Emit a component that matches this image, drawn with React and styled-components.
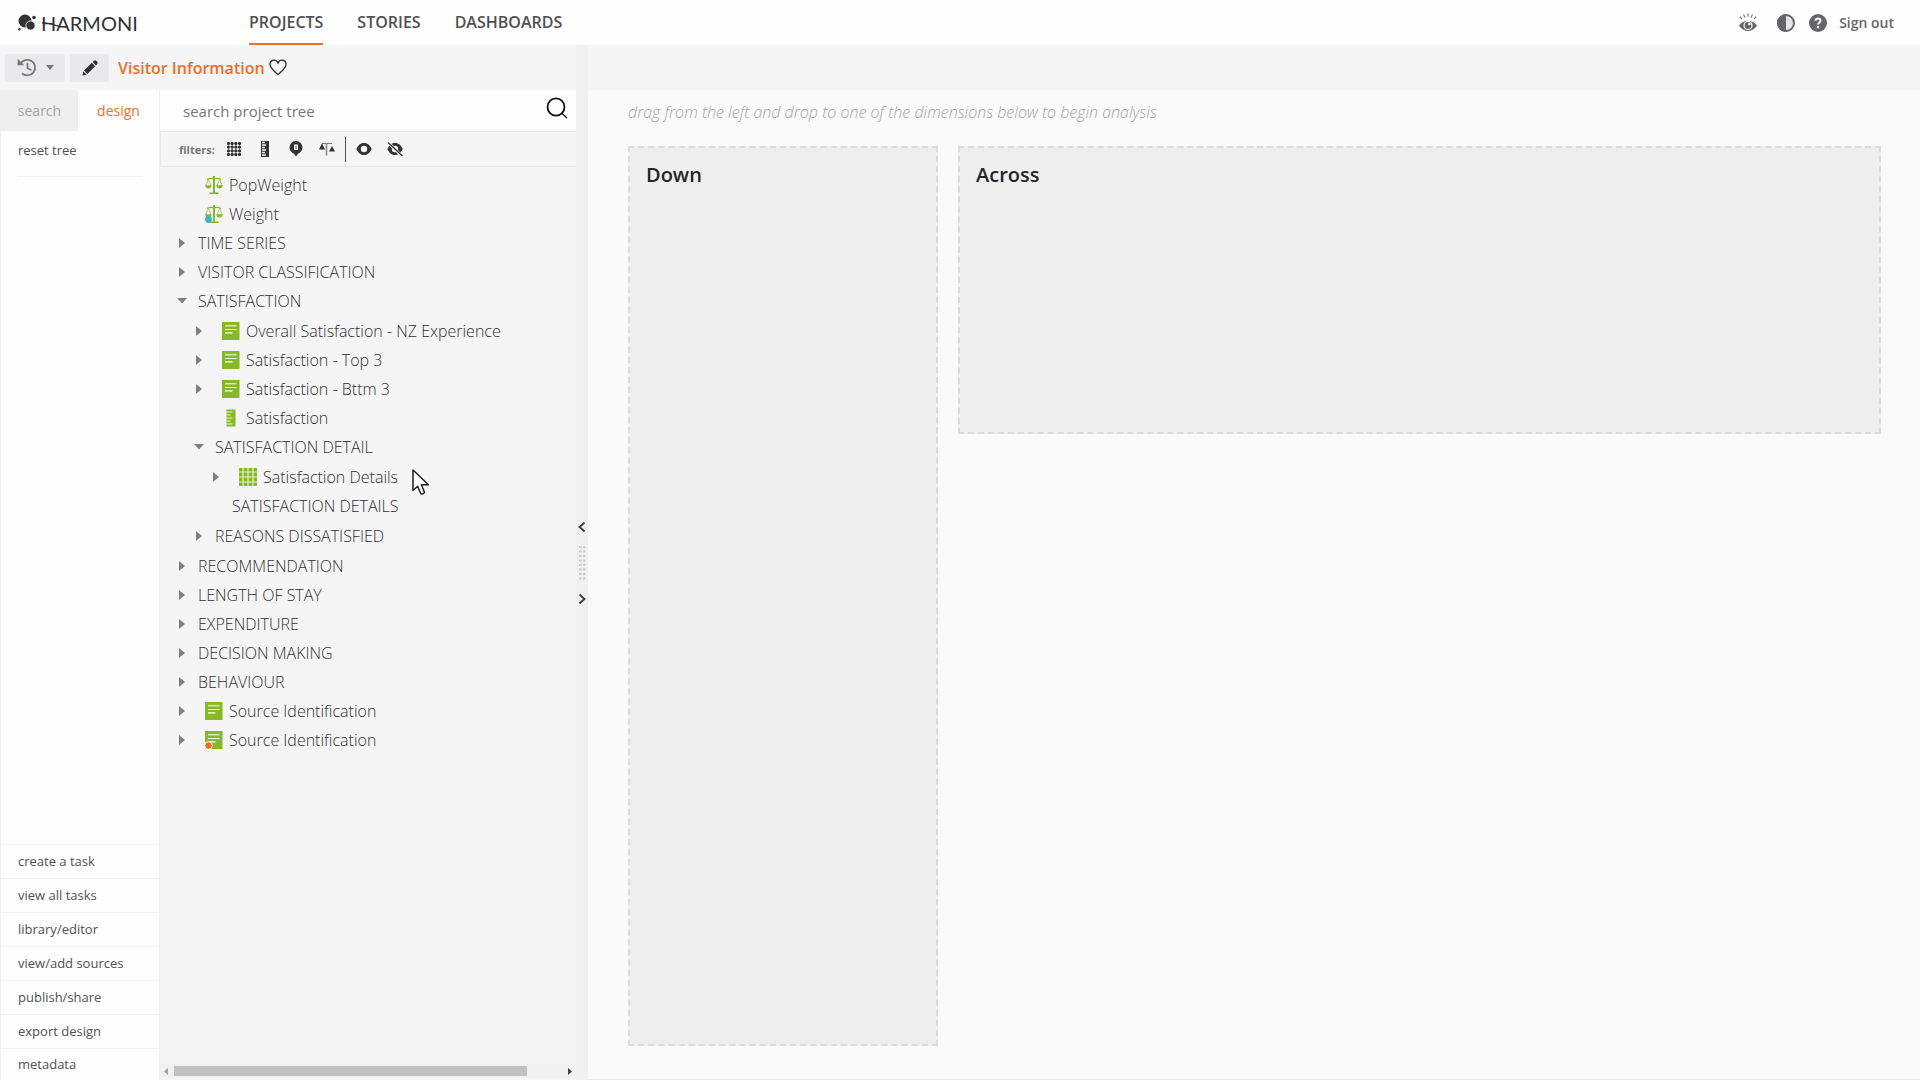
import React from 'react';
import styled, { createGlobalStyle, css } from 'styled-components';

const Colors = {
  orange: '#e8702a',
  green: '#86b828',
  text: '#505052',
  dark: '#333335',
  white: '#fefefe',
  panel: '#f5f5f5',
  line: '#e9e9e9',
};

const GlobalStyle = createGlobalStyle`
  * {
    box-sizing: border-box;
  }
  body {
    margin: 0;
    font-family: 'Open Sans', 'Noto Sans', sans-serif;
    color: ${Colors.text};
    background: #fafafa;
  }
  button,
  input {
    font: inherit;
    color: inherit;
    border: 0;
    padding: 0;
    background: none;
  }
  a {
    color: inherit;
    text-decoration: none;
  }
  ul {
    list-style: none;
    margin: 0;
    padding: 0;
  }
  svg {
    display: block;
    flex: none;
  }
`;

const Page = styled.div`
  display: flex;
  flex-direction: column;
  height: 100vh;
`;

const Header = styled.header`
  display: flex;
  height: 45px;
  background: ${Colors.white};
`;

const Brand = styled.a`
  display: flex;
  align-items: center;
  width: 249px;
  padding-left: 17px;
`;

const BrandName = styled.span`
  position: relative;
  margin-left: 4px;
  font-family: Lato, sans-serif;
  font-size: 20px;
  line-height: 24px;
  color: ${Colors.dark};
  svg {
    position: absolute;
    left: 0;
    top: 8px;
  }
`;

const Nav = styled.nav`
  display: flex;
  flex: 1;
  gap: 34px;
`;

const NavLink = styled.a`
  padding-top: 2px;
  font-size: 16px;
  font-weight: 600;
  line-height: 41px;
  border-bottom: 2px solid transparent;
  ${(props) =>
    props.$active &&
    css`
      border-color: ${Colors.orange};
    `}
`;

const HeaderTools = styled.div`
  display: flex;
  align-items: center;
  gap: 12px;
  padding-right: 26px;
  color: #666668;
  button:first-child {
    margin-right: 6px;
  }
  button + button {
    margin-left: 2px;
  }
  a {
    font-size: 14px;
    font-weight: 600;
  }
`;

const Body = styled.div`
  display: flex;
  flex: 1;
  min-height: 0;
`;

const Side = styled.aside`
  display: flex;
  flex-direction: column;
  width: 576px;
`;

const Toolbar = styled.div`
  display: flex;
  align-items: center;
  height: 45px;
  padding-left: 5px;
  background: ${Colors.panel};
`;

const ToolButton = styled.button`
  display: flex;
  align-items: center;
  justify-content: center;
  gap: 9px;
  width: ${(props) => props.$width}px;
  height: 28px;
  margin-right: 5px;
  border-radius: 2px;
  background: #e9e9eb;
`;

const ProjectTitle = styled.h1`
  margin: 0 4px;
  font-size: 16px;
  font-weight: 600;
  color: ${Colors.orange};
`;

const SideBody = styled.div`
  display: flex;
  flex: 1;
  min-height: 0;
`;

const MenuColumn = styled.div`
  display: flex;
  flex-direction: column;
  width: 160px;
  border-left: 1px solid #f0f0f0;
  border-right: 1px solid #f0f0f0;
  background: ${Colors.white};
`;

const Tabs = styled.div`
  display: flex;
  height: 41px;
`;

const Tab = styled.button`
  flex: ${(props) => (props.$active ? '1' : '0 0 77px')};
  font-size: 14px;
  color: ${(props) => (props.$active ? Colors.orange : '#a3a3a3')};
  background: ${(props) => (props.$active ? Colors.white : '#efefef')};
`;

const ResetRow = styled.div`
  flex: 1;
  margin: 0 16px;
  button {
    display: block;
    width: 100%;
    height: 46px;
    padding: 0 1px 8px;
    text-align: left;
    font-size: 13px;
    border-bottom: 1px solid #f1f1f3;
  }
`;

const MenuLink = styled.a`
  display: block;
  padding-left: 17px;
  border-top: 1px solid #f3f3f5;
  font-size: 13px;
  line-height: 33px;
  li:last-child & {
    line-height: 31px;
  }
`;

const TreeColumn = styled.section`
  position: relative;
  display: flex;
  flex: 1;
  flex-direction: column;
  min-width: 0;
  background: ${Colors.panel};
`;

const SearchBox = styled.label`
  display: flex;
  height: 41px;
  padding: 0 8px 0 23px;
  background: ${Colors.white};
  input {
    flex: 1;
    outline: 0;
    font-size: 15px;
  }
  input::placeholder {
    color: #77777a;
    opacity: 1;
  }
  svg {
    margin-top: 7px;
  }
`;

const Filters = styled.div`
  display: flex;
  align-items: center;
  height: 36px;
  padding-left: 18px;
  border: 1px solid ${Colors.line};
  border-right: 0;
  color: ${Colors.dark};
  span {
    width: 39px;
    font-size: 11px;
    font-weight: 700;
    color: #77777a;
  }
`;

const FilterButton = styled.button`
  display: flex;
  justify-content: center;
  width: 31px;
`;

const Divider = styled.i`
  width: 1px;
  height: 25px;
  margin: 0 2px 0 3px;
  background: #555;
`;

const TreeList = styled.ul`
  flex: 1;
  padding-top: 3px;
  overflow: hidden;
  ul {
    margin: 1px 0;
  }
`;

const TreeRow = styled.div`
  display: flex;
  align-items: center;
  height: 29px;
  padding-left: ${(props) => 16 + props.$level * 17}px;
  font-size: 16px;
  font-weight: 300;
  color: #303032;
  white-space: nowrap;
`;

const Toggle = styled.button`
  display: flex;
  align-items: center;
  justify-content: center;
  width: 12px;
  height: 14px;
  margin-right: 10px;
`;

const RowIcon = styled.span`
  width: 18px;
  margin: 0 6px 0 7px;
`;

const Scrollbar = styled.div`
  display: flex;
  align-items: center;
  height: 14px;
  margin-bottom: 2px;
  padding: 0 4px;
  background: #f1f1f1;
`;

const Track = styled.div`
  flex: 1;
  margin: 0 6px;
`;

const Thumb = styled.div`
  width: 91%;
  height: 10px;
  background: #c1c1c1;
`;

const Pointer = styled.svg`
  position: absolute;
  left: 252px;
  top: 379px;
  pointer-events: none;
`;

const Splitter = styled.div`
  display: flex;
  flex-direction: column;
  align-items: center;
  justify-content: center;
  gap: 13px;
  width: 12px;
  background: #f0f0f1;
`;

const Main = styled.main`
  display: flex;
  flex: 1;
  flex-direction: column;
  min-width: 0;
  border-bottom: 1px solid #ececec;
`;

const MainBar = styled.div`
  height: 45px;
  background: ${Colors.panel};
`;

const Workspace = styled.div`
  display: flex;
  flex: 1;
  flex-direction: column;
  padding: 0 39px 33px 40px;
`;

const Hint = styled.p`
  margin: 0;
  padding: 11px 0 23px;
  font-size: 16px;
  font-style: italic;
  font-weight: 300;
  line-height: 22px;
  color: #a4a4a4;
`;

const Zones = styled.div`
  display: grid;
  flex: 1;
  grid-template-columns: 310px 1fr;
  gap: 20px;
`;

const DropZone = styled.section`
  height: ${(props) => props.$height};
  padding: 13px 16px;
  border: 2px dashed #dcdcdc;
  background: #efefef;
  h2 {
    margin: 0;
    font-size: 20px;
    font-weight: 600;
    line-height: 28px;
    color: #262628;
  }
`;

const BrandMark = () => (
  <svg width="20" height="17" viewBox="0 0 20 17" fill={Colors.dark}>
    <circle cx="8" cy="7" r="6.5" />
    <circle cx="13.5" cy="11.5" r="4.6" stroke="#fefefe" strokeWidth=".8" />
    <circle cx="17" cy="3.5" r="1.8" />
    <circle cx="2.4" cy="15.2" r="1.2" />
  </svg>
);

const RadiantEye = () => (
  <svg width="18" height="19" viewBox="0 0 18 19" fill="none" stroke="currentColor">
    <path d="M.8 3.6 3 5.8M4.5 1.4 6 4.4M9 .4v3.4M13.5 1.4 12 4.4M17.2 3.6 15 5.8" strokeWidth="1.1" />
    <path d="M0 12.5C4.5 6.2 13.5 6.2 18 12.5 13.5 19.8 4.5 19.8 0 12.5z" fill="currentColor" stroke="none" />
    <circle cx="9" cy="12.4" r="4.6" fill="#fefefe" stroke="none" />
    <circle cx="9" cy="12.5" r="3.4" fill="currentColor" stroke="none" />
    <circle cx="10.4" cy="11" r="1.3" fill="#fefefe" stroke="none" />
  </svg>
);

const Contrast = () => (
  <svg width="18" height="18" viewBox="0 0 18 18">
    <circle cx="9" cy="9" r="8" fill="#e6e6e8" stroke="currentColor" strokeWidth="2" />
    <path d="M9 0a9 9 0 0 0 0 18z" fill="currentColor" />
  </svg>
);

const Help = () => (
  <svg width="18" height="18" viewBox="0 0 18 18" fill="none">
    <circle cx="9" cy="9" r="9" fill="currentColor" />
    <path d="M6.5 6.8C6.7 3.6 11.6 3.7 11.5 6.7 11.4 8.5 9 8.6 9 10.6" stroke="#fefefe" strokeWidth="2" />
    <path d="M7.9 12h2.2v2.2H7.9z" fill="#fefefe" />
  </svg>
);

const HistoryIcon = () => (
  <svg width="20" height="19" viewBox="0 0 20 19" fill="none" stroke="#77777a" strokeWidth="1.8">
    <path d="M3.4 6A7.8 7.8 0 1 1 5 15.4" />
    <path d="M10.5 5v5.2l4 2" />
    <path d="M.6.8v6.4h6.6z" fill="#77777a" stroke="none" />
  </svg>
);

const PencilIcon = () => (
  <svg width="16" height="16" viewBox="0 0 16 16" fill={Colors.dark}>
    <path d="M.4 15.6 1.4 11.400 4.600 14.600z" />
    <path d="M2 10.600 9.800 2.800 13.200 6.200 5.400 14z" />
    <path d="M10.600 2 12 .7Q13.200-.2 14.400 1L15 1.600Q16.200 2.800 15.300 4L14 5.400z" />
  </svg>
);

const HeartIcon = () => (
  <svg width="18" height="17" viewBox="0 0 18 17" fill="none" stroke={Colors.dark} strokeWidth="1.4">
    <path d="M9 15.6C6 12.8 1 9.5 1 5.3 1 .6 7 -.4 9 4 11 -.4 17 .6 17 5.3 17 9.5 12 12.8 9 15.6z" />
  </svg>
);

const SearchIcon = () => (
  <svg width="22" height="22" viewBox="0 0 22 22" fill="none" stroke="#111">
    <ellipse cx="10" cy="10" rx="8.5" ry="8.7" strokeWidth="1.8" />
    <path d="m15.5 16 5.5 5" strokeWidth="1.3" />
  </svg>
);

const DotGrid = () => (
  <svg width="14" height="14" viewBox="0 0 14 14" fill="currentColor">
    {[0, 1, 2, 3].map((y) =>
      [0, 1, 2, 3].map((x) => (
        <rect key={`${x}${y}`} x={x * 3.7} y={y * 3.7} width="2.9" height="2.9" rx="1" />
      ))
    )}
    <path d="M0 1.5h14M0 5.2h14M0 8.9h14M0 12.6h14M1.5 0v14M5.2 0v14M8.9 0v14M12.6 0v14" stroke="currentColor" strokeWidth=".5" />
  </svg>
);

const RulerIcon = () => (
  <svg width="8" height="16" viewBox="0 0 8 16">
    <path d="M0 0h8v16H0z" fill="currentColor" />
    <path d="M1 1.5h3M1 4h4M1 6.5h3M1 9h4M1 11.5h3M1 14h4" stroke="#f5f5f5" strokeWidth="1.3" />
  </svg>
);

const PinIcon = () => (
  <svg width="14" height="16" viewBox="0 0 14 16">
    <path d="M7 0a6.5 6.5 0 0 1 6.5 6.5C13.5 9.8 11.4 11.4 9 12.8L7 15.5 5 12.8C2.6 11.4.5 9.8.5 6.5A6.5 6.5 0 0 1 7 0z" fill="currentColor" />
    <path d="M5 3.5h4v5.5H5z" fill="#f5f5f5" />
    <path d="M6.2 5h1.6v3H6.2z" fill="#999" />
  </svg>
);

const BalanceIcon = () => (
  <svg width="16" height="14" viewBox="0 0 16 14">
    <path d="M3 1.5h10" stroke="#777" />
    <path d="M7.5 1v12.500" stroke="#8a8a8c" strokeWidth="1.600" />
    <path d="M3 1.200 6 7.500H0zM13 4l3 5.500h-6z" fill="currentColor" />
  </svg>
);

const EyeIcon = ({ off }) => (
  <svg width="16" height="14" viewBox="0 0 16 14" fill="currentColor">
    <path d="M.3 7C2.5 2.5 5 1 8 1s5.5 1.5 7.7 6C13.5 11.5 11 13 8 13S2.5 11.5.3 7z" />
    <circle cx="8" cy="7" r="3.2" fill="#f5f5f5" />
    {off && <path d="M1 .5 15 14" stroke="#f5f5f5" strokeWidth="3" />}
    {off && <path d="M1 .5 15.5 14" stroke="currentColor" strokeWidth="1.3" />}
  </svg>
);

const ScaleIcon = ({ dot }) => (
  <svg width="18" height="18" viewBox="0 0 18 18" fill="none" stroke={Colors.green}>
    <path d="M9 0v17" strokeWidth="2" />
    <path d="M4.5 17.2h9" strokeWidth="1.6" />
    <path d="M2 3.5Q5.5 1.5 9 2.8 12.5 1.5 16 3.5" strokeWidth="1.3" />
    <path d="M3.4 3.5.8 9.5M3.4 3.5 6 9.5M14.6 3.5 12 9.5M14.6 3.5 17.2 9.5" strokeWidth=".7" />
    <path d="M0 9.3h6.7Q6 12.5 3.4 12.5T0 9.3zM11.3 9.3H18Q17.3 12.5 14.6 12.5T11.3 9.3z" fill={Colors.green} stroke="none" />
    {dot && <circle cx="3.5" cy="14.5" r="3.4" fill="#3cb4c0" stroke="none" />}
  </svg>
);

const QuestionIcon = ({ dot }) => (
  <svg width="18" height="18" viewBox="0 0 18 18">
    <path d="M0 0h17.5v18H0z" fill={Colors.green} />
    <path d="M3 3.7h11.5" stroke="#d5e6b0" strokeWidth="1.6" />
    <path d="M3 7.5h11.5M3 10.8h7.5" stroke="#fff" strokeWidth="1.2" />
    {dot && <circle cx="3.5" cy="14.5" r="3.8" fill="#ee6b1d" stroke="#f5f5f5" strokeWidth="1" />}
  </svg>
);

const MeasureIcon = () => (
  <svg width="18" height="18" viewBox="0 0 18 18">
    <path d="M4.5.5h9v17h-9z" fill={Colors.green} />
    <path d="M4.5 3h6M4.5 6h4M4.5 9h6M4.5 12h4M4.5 15h6" stroke="#e9f3d3" strokeWidth="1.2" />
  </svg>
);

const TableIcon = () => (
  <svg width="18" height="18" viewBox="0 0 18 18">
    <path d="M0 0h18v18H0z" fill={Colors.green} />
    <path d="M4 0v18M9 0v18M14 0v18M0 4h18M0 9h18M0 14h18" stroke="#e3efc8" strokeWidth="1.2" />
  </svg>
);

const ChevronIcon = ({ right }) => (
  <svg width="8" height="10" viewBox="0 0 8 10" fill="none" stroke="#3a3a3c" strokeWidth="1.8">
    <path d={right ? 'M1.5 .5 6.5 5l-5 4.5' : 'M6.5 .5 1.5 5l5 4.5'} />
  </svg>
);

const GripIcon = () => (
  <svg width="7" height="36" viewBox="0 0 7 36" fill="#c9c9cb">
    {[0, 1, 2, 3, 4, 5, 6, 7].map((i) => (
      <path key={i} d={`M0 ${1 + i * 4.5}h2.5v2H0zM4 ${1 + i * 4.5}h2.5v2H4z`} />
    ))}
  </svg>
);

const ICONS = {
  scale: <ScaleIcon />,
  scaleDot: <ScaleIcon dot />,
  question: <QuestionIcon />,
  questionDot: <QuestionIcon dot />,
  measure: <MeasureIcon />,
  table: <TableIcon />,
};

const TREE = [
  { label: 'PopWeight', icon: 'scale', leaf: true },
  { label: 'Weight', icon: 'scaleDot', leaf: true },
  { label: 'TIME SERIES' },
  { label: 'VISITOR CLASSIFICATION' },
  {
    label: 'SATISFACTION',
    children: [
      { label: 'Overall Satisfaction - NZ Experience', icon: 'question' },
      { label: 'Satisfaction - Top 3', icon: 'question' },
      { label: 'Satisfaction - Bttm 3', icon: 'question' },
      { label: 'Satisfaction', icon: 'measure', leaf: true },
      {
        label: 'SATISFACTION DETAIL',
        children: [
          { label: 'Satisfaction Details', icon: 'table' },
          { label: 'SATISFACTION DETAILS', leaf: true },
        ],
      },
      { label: 'REASONS DISSATISFIED' },
    ],
  },
  { label: 'RECOMMENDATION' },
  { label: 'LENGTH OF STAY' },
  { label: 'EXPENDITURE' },
  { label: 'DECISION MAKING' },
  { label: 'BEHAVIOUR' },
  { label: 'Source Identification', icon: 'question' },
  { label: 'Source Identification', icon: 'questionDot' },
];

const MENU = [
  'create a task',
  'view all tasks',
  'library/editor',
  'view/add sources',
  'publish/share',
  'export design',
  'metadata',
];

function TreeNode({ node, level }) {
  return (
    <li>
      <TreeRow $level={level}>
        <Toggle aria-label={node.label} disabled={node.leaf}>
          {!node.leaf && (
            <svg width="10" height="10" viewBox="0 0 10 10" fill="#808082">
              <path d={node.children ? 'M0 2h10L5 7.5z' : 'M2 0v10l6-5z'} />
            </svg>
          )}
        </Toggle>
        {node.icon && <RowIcon>{ICONS[node.icon]}</RowIcon>}
        <span>{node.label}</span>
      </TreeRow>
      {node.children && (
        <ul>
          {node.children.map((child) => (
            <TreeNode key={child.label} node={child} level={level + 1} />
          ))}
        </ul>
      )}
    </li>
  );
}

export default function App() {
  return (
    <Page>
      <GlobalStyle />
      <Header>
        <Brand href="#home">
          <BrandMark />
          <BrandName>
            HARMONI
            <svg width="34" height="10" viewBox="0 0 34 10" fill="none" stroke={Colors.dark} strokeWidth="1.3">
              <path d="M1 4C10 3 16 9 27 8" />
            </svg>
          </BrandName>
        </Brand>
        <Nav>
          <NavLink href="#projects" $active>PROJECTS</NavLink>
          <NavLink href="#stories">STORIES</NavLink>
          <NavLink href="#dashboards">DASHBOARDS</NavLink>
        </Nav>
        <HeaderTools>
          <button aria-label="Preview"><RadiantEye /></button>
          <button aria-label="Contrast"><Contrast /></button>
          <button aria-label="Help"><Help /></button>
          <a href="#sign-out">Sign out</a>
        </HeaderTools>
      </Header>
      <Body>
        <Side>
          <Toolbar>
            <ToolButton $width={60} aria-label="History">
              <HistoryIcon />
              <svg width="8" height="5" viewBox="0 0 8 5" fill="#77777a">
                <path d="M0 0h8L4 5z" />
              </svg>
            </ToolButton>
            <ToolButton $width={39} aria-label="Edit"><PencilIcon /></ToolButton>
            <ProjectTitle>Visitor Information</ProjectTitle>
            <button aria-label="Favourite"><HeartIcon /></button>
          </Toolbar>
          <SideBody>
            <MenuColumn>
              <Tabs>
                <Tab>search</Tab>
                <Tab $active>design</Tab>
              </Tabs>
              <ResetRow>
                <button>reset tree</button>
              </ResetRow>
              <ul>
                {MENU.map((item) => (
                  <li key={item}>
                    <MenuLink href="#menu">{item}</MenuLink>
                  </li>
                ))}
              </ul>
            </MenuColumn>
            <TreeColumn>
              <SearchBox>
                <input type="text" placeholder="search project tree" aria-label="search project tree" />
                <SearchIcon />
              </SearchBox>
              <Filters>
                <span>filters:</span>
                <FilterButton aria-label="Grids"><DotGrid /></FilterButton>
                <FilterButton aria-label="Measures"><RulerIcon /></FilterButton>
                <FilterButton aria-label="Locations"><PinIcon /></FilterButton>
                <FilterButton aria-label="Weights"><BalanceIcon /></FilterButton>
                <Divider />
                <FilterButton aria-label="Visible"><EyeIcon /></FilterButton>
                <FilterButton aria-label="Hidden"><EyeIcon off /></FilterButton>
              </Filters>
              <TreeList>
                {TREE.map((node, i) => (
                  <TreeNode key={i} node={node} level={0} />
                ))}
              </TreeList>
              <Scrollbar>
                <svg width="4" height="7" viewBox="0 0 4 7" fill="#a3a3a3"><path d="M4 0v7L0 3.5z" /></svg>
                <Track><Thumb /></Track>
                <svg width="4" height="7" viewBox="0 0 4 7" fill="#404040"><path d="M0 0v7l4-3.5z" /></svg>
              </Scrollbar>
              <Pointer width="18" height="27" viewBox="0 0 18 27" fill="#fff" stroke="#222" strokeWidth="1.5">
                <path d="M1 1v20.5l4.7-4.3 3.2 7.5q2.2 1 3.6-1.3L9.4 15.8h7z" strokeLinejoin="round" />
              </Pointer>
            </TreeColumn>
          </SideBody>
        </Side>
        <Splitter>
          <ChevronIcon />
          <GripIcon />
          <ChevronIcon right />
        </Splitter>
        <Main>
          <MainBar />
          <Workspace>
            <Hint>drag from the left and drop to one of the dimensions below to begin analysis</Hint>
            <Zones>
              <DropZone $height="100%">
                <h2>Down</h2>
              </DropZone>
              <DropZone $height="32%">
                <h2>Across</h2>
              </DropZone>
            </Zones>
          </Workspace>
        </Main>
      </Body>
    </Page>
  );
}
